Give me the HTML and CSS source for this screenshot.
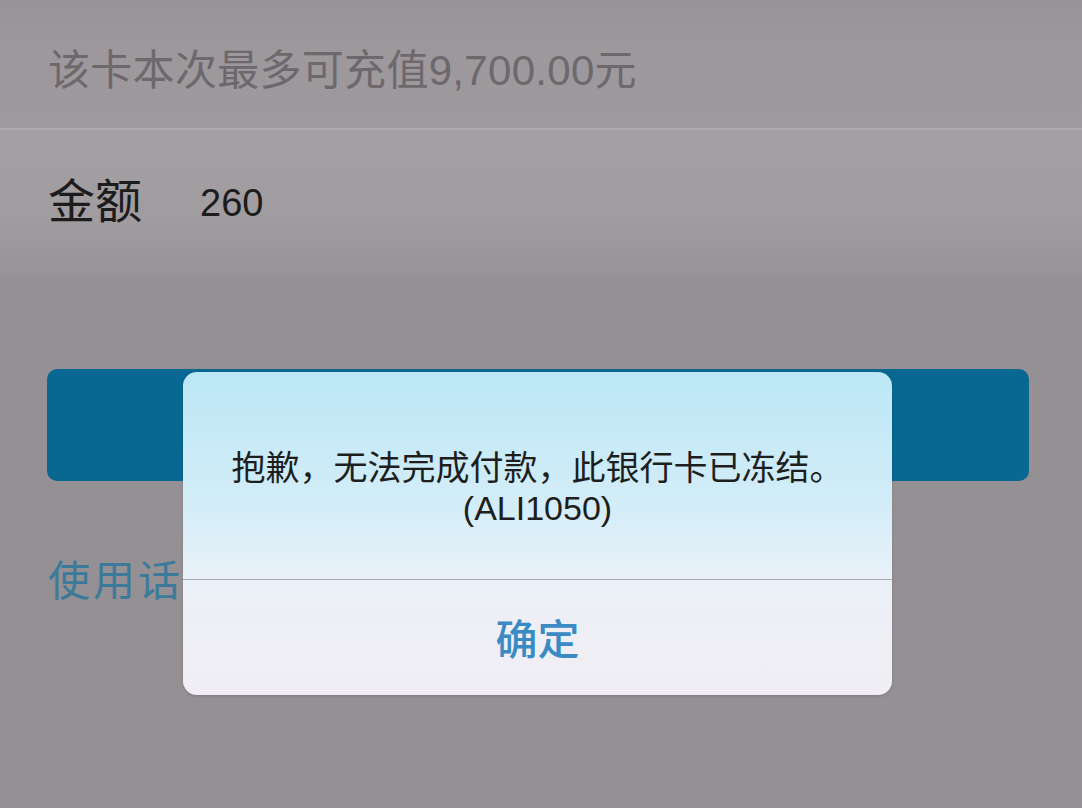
FILE: index.html
```html
<!DOCTYPE html>
<html lang="zh-CN">
<head>
<meta charset="utf-8">
<title>充值</title>
<link rel="stylesheet" href="styles.css">
</head>
<body>
<div class="page">
  <div class="limit">该卡本次最多可充值9,700.00元</div>
  <div class="divider"></div>
  <div class="amount-row">
    <span class="label">金额</span>
    <span class="value">260</span>
  </div>
  <div class="confirm-btn"></div>
  <div class="alt-link">使用话费充值</div>
</div>
<div class="dialog">
  <div class="dialog-msg">
    <div class="msg-line">抱歉，无法完成付款，此银行卡已冻结。</div>
    <div class="msg-code">(ALI1050)</div>
  </div>
  <div class="dialog-btn">确定</div>
</div>
</body>
</html>
```
FILE: styles.css
```css
html, body {
  margin: 0;
  padding: 0;
}
body {
  width: 1082px;
  height: 808px;
  overflow: hidden;
  background: #949094;
  font-family: "Liberation Sans", "Noto Sans CJK SC", sans-serif;
  position: relative;
}
.page {
  display: flex;
  flex-direction: column;
}
.limit {
  height: 128px;
  display: flex;
  align-items: center;
  padding-left: 48px;
  padding-top: 4px;
  box-sizing: border-box;
  font-size: 42px;
  color: #6c686c;
  background: linear-gradient(#979397, #9c989c 40%, #9d999c);
  letter-spacing: 0.3px;
}
.divider {
  height: 2px;
  background: #aeabae;
}
.amount-row {
  height: 145px;
  display: flex;
  align-items: center;
  padding-left: 48px;
  padding-bottom: 10px;
  box-sizing: border-box;
  background: linear-gradient(#a3a0a3, #a09ca0 60%, #979397);
}
.label {
  font-size: 47px;
  color: #1c1c1c;
  font-family: "Noto Sans CJK SC", sans-serif;
}
.value {
  font-size: 38px;
  color: #1c1c1c;
  margin-left: 58px;
  padding-top: 12px;
}
.confirm-btn {
  margin: 94px 53px 0 47px;
  height: 112px;
  border-radius: 10px;
  background: #086891;
}
.alt-link {
  margin-top: 72px;
  padding-left: 48px;
  font-size: 42px;
  letter-spacing: 3px;
  color: #3c7a9c;
  font-family: "Noto Sans CJK SC", sans-serif;
  line-height: 50px;
}
.dialog {
  position: absolute;
  left: 183px;
  top: 372px;
  width: 709px;
  height: 323px;
  border-radius: 14px;
  overflow: hidden;
  display: flex;
  flex-direction: column;
  background: linear-gradient(#bce7f6, #d2edf8 40%, #e9f1f8 64%, #eeeff6 75%, #f0eef4);
  box-shadow: 0 1px 3px rgba(0,0,0,0.15);
}
.dialog-msg {
  height: 208px;
  box-sizing: border-box;
  padding-top: 72px;
  text-align: center;
  border-bottom: 1px solid #a7a8b0;
  color: #1e1e1e;
}
.msg-line {
  font-family: "Noto Sans CJK SC", sans-serif;
  font-size: 34px;
  line-height: 43px;
}
.msg-code {
  font-size: 34px;
  line-height: 43px;
}
.dialog-btn {
  flex: 1;
  display: flex;
  align-items: center;
  justify-content: center;
  font-family: "Noto Sans CJK SC", sans-serif;
  font-size: 42px;
  font-weight: 500;
  color: #3a8bc3;
  padding-bottom: 2px;
}
```
